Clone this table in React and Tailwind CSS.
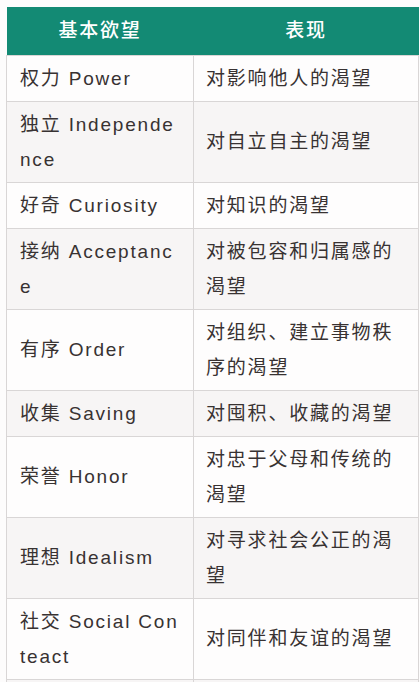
const desires = [
  { name: "权力 Power", desc: "对影响他人的渴望" },
  { name: "独立 Independence", desc: "对自立自主的渴望" },
  { name: "好奇 Curiosity", desc: "对知识的渴望" },
  { name: "接纳 Acceptance", desc: "对被包容和归属感的渴望" },
  { name: "有序 Order", desc: "对组织、建立事物秩序的渴望" },
  { name: "收集 Saving", desc: "对囤积、收藏的渴望" },
  { name: "荣誉 Honor", desc: "对忠于父母和传统的渴望" },
  { name: "理想 Idealism", desc: "对寻求社会公正的渴望" },
  { name: "社交 Social Conteact", desc: "对同伴和友谊的渴望" },
  { name: "", desc: "" },
];

const App = () => {
  return (
    <div
      className="h-[682px] overflow-hidden bg-[#fdfcfc] pt-[7px] pl-[6px]"
      style={{ fontFamily: '"Liberation Sans", "Noto Sans CJK SC", sans-serif' }}
    >
      <table className="w-[412px] table-fixed border-collapse text-[19px] tracking-[1.8px] text-[#383232]">
        <colgroup>
          <col className="w-[187px]" />
          <col className="w-[225px]" />
        </colgroup>
        {/* Header */}
        <thead>
          <tr className="h-[48px] bg-[#138a74] text-white">
            <th className="font-medium text-center align-middle">基本欲望</th>
            <th className="font-medium text-center align-middle">表现</th>
          </tr>
        </thead>
        <tbody>
          {desires.map((row, i) => (
            <tr key={i} className={i % 2 === 1 ? "bg-[#f7f5f5]" : "bg-[#fefdfd]"}>
              <td className="border border-[#d9d6d6] pl-[13px] pr-[11px] py-[5px] align-middle leading-[35px] h-[46px] break-all">
                {row.name}
              </td>
              <td className="border border-[#d9d6d6] pl-[12px] pr-[12px] py-[5px] align-middle leading-[35px] h-[46px] break-all">
                {row.desc}
              </td>
            </tr>
          ))}
        </tbody>
      </table>
    </div>
  );
};

export default App;
